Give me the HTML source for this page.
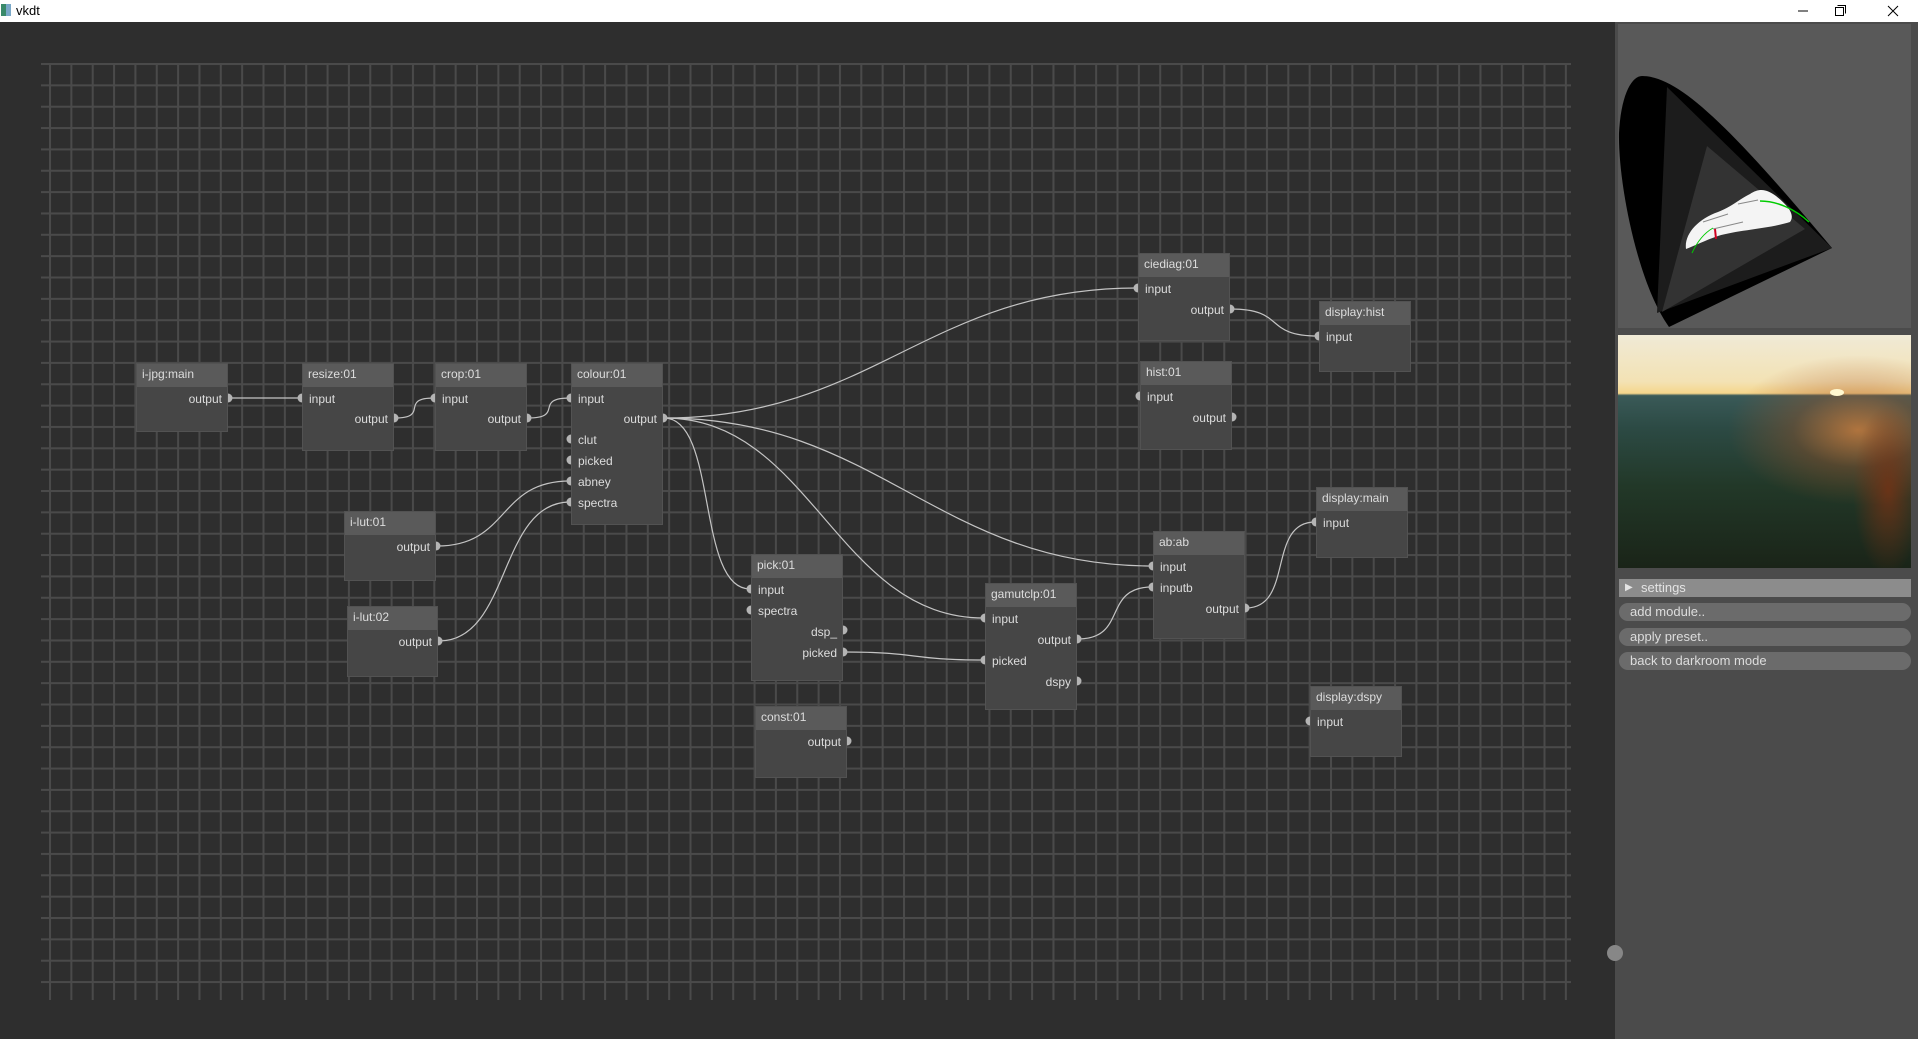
<!DOCTYPE html>
<html><head><meta charset="utf-8"><style>
*{margin:0;padding:0}
body{width:1918px;height:1039px;overflow:hidden;background:#2e2e2e;font-family:"Liberation Sans",sans-serif;position:relative}
#tb{position:absolute;left:0;top:0;width:1918px;height:22px;background:#fff;color:#000;font-size:13px}
.n{position:absolute;background:#464646;border:1px solid #525252;box-sizing:border-box}
.h{height:23px;background:#5a5a5a;padding-left:5px;line-height:21px;font-size:12px;color:#ddd;white-space:nowrap}
.l{position:absolute;left:6px;font-size:12px;color:#ddd;line-height:14px;white-space:nowrap}
.r{left:auto;right:5px}
#rp{position:absolute;left:1615px;top:22px;width:303px;height:1017px;background:#4b4b4b}
.btn{position:absolute;left:1619px;width:292px;height:18px;border-radius:9px;background:#6b6b6b;color:#ddd;font-size:13px;line-height:18px;padding-left:11px;box-sizing:border-box}
</style></head><body>
<div id="tb">
 <div style="position:absolute;left:1px;top:4px;width:5px;height:12px;background:#3a8a6a"></div>
 <div style="position:absolute;left:6px;top:4px;width:5px;height:12px;background:#7aa8c8"></div>
 <div style="position:absolute;left:16px;top:3px">vkdt</div>
 <svg style="position:absolute;left:1790px;top:0" width="128" height="22">
  <path d="M8 11H18" stroke="#000" stroke-width="1"/>
  <rect x="45.5" y="7.5" width="8" height="8" fill="none" stroke="#000"/>
  <path d="M47.5 5.5H55.5V13.5" fill="none" stroke="#000"/>
  <path d="M98 6L108 16M108 6L98 16" stroke="#000"/>
 </svg>
</div>
<svg style="position:absolute;left:0;top:0" width="1918" height="1039">
 <defs>
  <pattern id="pv" patternUnits="userSpaceOnUse" x="49" y="0" width="21.35" height="20"><rect x="0" y="0" width="2" height="20" fill="#4a4a4a"/></pattern>
  <pattern id="ph" patternUnits="userSpaceOnUse" x="0" y="63" width="20" height="21.35"><rect x="0" y="0" width="20" height="2" fill="#4a4a4a"/></pattern>
 </defs>
 <rect x="49" y="63" width="1518" height="937" fill="url(#pv)"/>
 <rect x="41" y="63" width="1530" height="921" fill="url(#ph)"/>
 <g fill="none" stroke="#c4c4c4" stroke-width="1.2">
  <path d="M229 398L301 398"/>
  <path d="M395 418C430 418 399 398 434 398"/>
  <path d="M528 418C565 418 533 398 570 398"/>
  <path d="M437 546C510 546 497 481 570 481"/>
  <path d="M439 641C511 641 498 502 570 502"/>
  <path d="M664 418C873 418 928 288 1137 288"/>
  <path d="M664 418C718 418 696 589 750 589"/>
  <path d="M664 418C812 418 836 618 984 618"/>
  <path d="M664 418C879 418 937 566 1152 566"/>
  <path d="M844 652C920 652 908 660 984 660"/>
  <path d="M1078 639C1128 639 1102 587 1152 587"/>
  <path d="M1246 608C1294 608 1267 522 1315 522"/>
  <path d="M1231 309C1286 309 1263 336 1318 336"/>
 </g>
</svg>

<div class="n" style="left:136px;top:363px;width:92px;height:69px"><div class="h">i-jpg:main</div><div class="l r" style="top:28px">output</div></div>
<div class="n" style="left:302px;top:363px;width:92px;height:88px"><div class="h">resize:01</div><div class="l" style="top:28px">input</div><div class="l r" style="top:48px">output</div></div>
<div class="n" style="left:435px;top:363px;width:92px;height:88px"><div class="h">crop:01</div><div class="l" style="top:28px">input</div><div class="l r" style="top:48px">output</div></div>
<div class="n" style="left:571px;top:363px;width:92px;height:162px"><div class="h">colour:01</div><div class="l" style="top:28px">input</div><div class="l r" style="top:48px">output</div><div class="l" style="top:69px">clut</div><div class="l" style="top:90px">picked</div><div class="l" style="top:111px">abney</div><div class="l" style="top:132px">spectra</div></div>
<div class="n" style="left:344px;top:511px;width:92px;height:70px"><div class="h">i-lut:01</div><div class="l r" style="top:28px">output</div></div>
<div class="n" style="left:347px;top:606px;width:91px;height:71px"><div class="h">i-lut:02</div><div class="l r" style="top:28px">output</div></div>
<div class="n" style="left:751px;top:554px;width:92px;height:127px"><div class="h">pick:01</div><div class="l" style="top:28px">input</div><div class="l" style="top:49px">spectra</div><div class="l r" style="top:70px">dsp_</div><div class="l r" style="top:91px">picked</div></div>
<div class="n" style="left:755px;top:706px;width:92px;height:72px"><div class="h">const:01</div><div class="l r" style="top:28px">output</div></div>
<div class="n" style="left:985px;top:583px;width:92px;height:127px"><div class="h">gamutclp:01</div><div class="l" style="top:28px">input</div><div class="l r" style="top:49px">output</div><div class="l" style="top:70px">picked</div><div class="l r" style="top:91px">dspy</div></div>
<div class="n" style="left:1138px;top:253px;width:92px;height:88px"><div class="h">ciediag:01</div><div class="l" style="top:28px">input</div><div class="l r" style="top:49px">output</div></div>
<div class="n" style="left:1140px;top:361px;width:92px;height:89px"><div class="h">hist:01</div><div class="l" style="top:28px">input</div><div class="l r" style="top:49px">output</div></div>
<div class="n" style="left:1319px;top:301px;width:92px;height:71px"><div class="h">display:hist</div><div class="l" style="top:28px">input</div></div>
<div class="n" style="left:1316px;top:487px;width:92px;height:71px"><div class="h">display:main</div><div class="l" style="top:28px">input</div></div>
<div class="n" style="left:1153px;top:531px;width:92px;height:108px"><div class="h">ab:ab</div><div class="l" style="top:28px">input</div><div class="l" style="top:49px">inputb</div><div class="l r" style="top:70px">output</div></div>
<div class="n" style="left:1310px;top:686px;width:92px;height:71px"><div class="h">display:dspy</div><div class="l" style="top:28px">input</div></div>

<svg style="position:absolute;left:0;top:0" width="1918" height="1039" fill="#b4b4b4">
 <g>
  <path d="M228 393.5A4.5 4.5 0 0 1 228 402.5Z"/>
  <path d="M394 413.5A4.5 4.5 0 0 1 394 422.5Z"/>
  <path d="M527 413.5A4.5 4.5 0 0 1 527 422.5Z"/>
  <path d="M663 413.5A4.5 4.5 0 0 1 663 422.5Z"/>
  <path d="M436 541.5A4.5 4.5 0 0 1 436 550.5Z"/>
  <path d="M438 636.5A4.5 4.5 0 0 1 438 645.5Z"/>
  <path d="M843 625.5A4.5 4.5 0 0 1 843 634.5Z"/>
  <path d="M843 647.5A4.5 4.5 0 0 1 843 656.5Z"/>
  <path d="M847 736.5A4.5 4.5 0 0 1 847 745.5Z"/>
  <path d="M1077 634.5A4.5 4.5 0 0 1 1077 643.5Z"/>
  <path d="M1077 676.5A4.5 4.5 0 0 1 1077 685.5Z"/>
  <path d="M1230 304.5A4.5 4.5 0 0 1 1230 313.5Z"/>
  <path d="M1232 412.5A4.5 4.5 0 0 1 1232 421.5Z"/>
  <path d="M1245 603.5A4.5 4.5 0 0 1 1245 612.5Z"/>
 </g>
 <g>
  <path d="M302 393.5A4.5 4.5 0 0 0 302 402.5Z"/>
  <path d="M435 393.5A4.5 4.5 0 0 0 435 402.5Z"/>
  <path d="M571 393.5A4.5 4.5 0 0 0 571 402.5Z"/>
  <path d="M571 434.5A4.5 4.5 0 0 0 571 443.5Z"/>
  <path d="M571 455.5A4.5 4.5 0 0 0 571 464.5Z"/>
  <path d="M571 476.5A4.5 4.5 0 0 0 571 485.5Z"/>
  <path d="M571 497.5A4.5 4.5 0 0 0 571 506.5Z"/>
  <path d="M751 584.5A4.5 4.5 0 0 0 751 593.5Z"/>
  <path d="M751 605.5A4.5 4.5 0 0 0 751 614.5Z"/>
  <path d="M985 613.5A4.5 4.5 0 0 0 985 622.5Z"/>
  <path d="M985 655.5A4.5 4.5 0 0 0 985 664.5Z"/>
  <path d="M1138 283.5A4.5 4.5 0 0 0 1138 292.5Z"/>
  <path d="M1140 391.5A4.5 4.5 0 0 0 1140 400.5Z"/>
  <path d="M1319 331.5A4.5 4.5 0 0 0 1319 340.5Z"/>
  <path d="M1316 517.5A4.5 4.5 0 0 0 1316 526.5Z"/>
  <path d="M1153 561.5A4.5 4.5 0 0 0 1153 570.5Z"/>
  <path d="M1153 582.5A4.5 4.5 0 0 0 1153 591.5Z"/>
  <path d="M1310 716.5A4.5 4.5 0 0 0 1310 725.5Z"/>
 </g>
</svg>

<div id="rp"></div>
<div style="position:absolute;left:1607px;top:945px;width:16px;height:16px;border-radius:50%;background:#878787"></div>

<svg style="position:absolute;left:1618px;top:24px" width="293" height="304">
 <rect width="293" height="304" fill="#595959"/>
 <path d="M51 303C20 260 0 160 1 109C3 70 14 52 24 52C60 52 110 100 214 224Z" fill="#000"/>
 <path d="M49 63L214 224L39 289Z" fill="#1c1c1c"/>
 <path d="M89 122L187 205L44 288Z" fill="#333"/>
 <path d="M68 225C66 210 80 195 100 188C115 182 120 176 132 170C142 163 150 166 158 172C168 180 178 190 172 198C150 205 120 206 100 212C88 216 76 222 68 225Z" fill="#f4f4f4"/>
 <path d="M85 198L110 190M120 180L140 176M95 205L125 198" stroke="#888" stroke-width="1"/>
 <path d="M98 215L97 205" stroke="#d00020" stroke-width="2"/>
 <path d="M142 177C160 177 178 186 191 198" stroke="#0c0" stroke-width="1.5" fill="none"/>
 <path d="M74 229C80 216 88 208 95 204" stroke="#0c0" stroke-width="1" fill="none"/>
</svg>

<div style="position:absolute;left:1618px;top:335px;width:293px;height:233px;overflow:hidden;background:linear-gradient(#f0ead6 0%,#f3e2b4 20%,#f5d68c 25%,#3a5a58 26%,#2c4a44 40%,#223828 65%,#1a2418 100%)">
 <div style="position:absolute;left:110px;top:20px;width:260px;height:150px;border-radius:50%;background:radial-gradient(closest-side,rgba(220,130,60,.75),rgba(170,85,40,.35) 50%,rgba(120,60,30,0))"></div>
 <div style="position:absolute;left:212px;top:54px;width:14px;height:7px;border-radius:50%;background:#fff8d0"></div>
 <div style="position:absolute;left:235px;top:70px;width:70px;height:170px;background:radial-gradient(closest-side,rgba(120,50,20,.8),rgba(80,40,20,0))"></div>
</div>

<div style="position:absolute;left:1619px;top:579px;width:292px;height:18px;background:#8c8c8c;color:#e4e4e4;font-size:13px;line-height:18px"><span style="position:absolute;left:6px;font-size:10px">&#9654;</span><span style="position:absolute;left:22px">settings</span></div>
<div class="btn" style="top:603px">add module..</div>
<div class="btn" style="top:628px">apply preset..</div>
<div class="btn" style="top:652px">back to darkroom mode</div>
</body></html>
